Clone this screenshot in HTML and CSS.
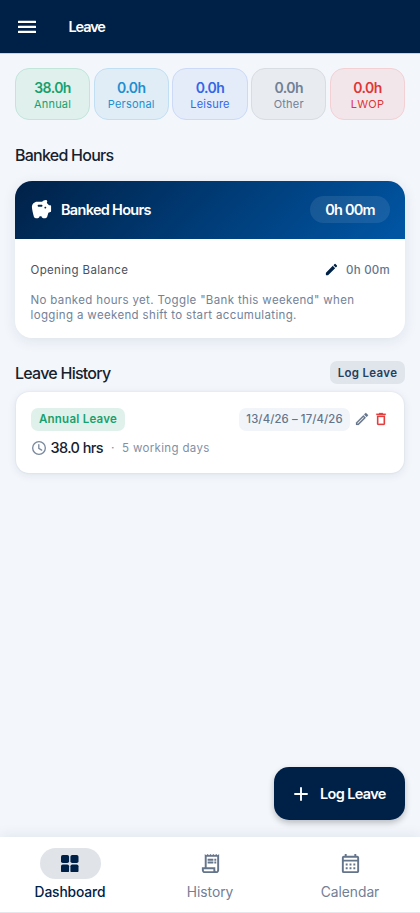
FILE: index.html
```html
<!DOCTYPE html>
<html lang="en">
<head>
<meta charset="utf-8">
<meta name="viewport" content="width=device-width, initial-scale=1">
<title>Leave</title>
<link rel="stylesheet" href="styles.css">
</head>
<body>
<div class="app">
  <header class="topbar">
    <svg class="menu" viewBox="0 0 18 14"><path d="M.5 1.900h17M.5 6.900h17M.5 11.900h17" stroke="#fff" stroke-width="2.200" stroke-linecap="round"/></svg>
    <h1 class="topbar-title">Leave</h1>
  </header>
  <main class="content">
    <section class="chips">
      <div class="chip annual"><b>38.0h</b><span>Annual</span></div>
      <div class="chip personal"><b>0.0h</b><span>Personal</span></div>
      <div class="chip leisure"><b>0.0h</b><span>Leisure</span></div>
      <div class="chip other"><b>0.0h</b><span>Other</span></div>
      <div class="chip lwop"><b>0.0h</b><span>LWOP</span></div>
    </section>
    <h2 class="section-title banked">Banked Hours</h2>
    <section class="bank">
      <div class="bank-head">
        <svg class="pig" viewBox="0 0 24 24"><path fill="#fff" fill-rule="evenodd" d="M19.830 7.500l-2.270-2.270c.070-.420.180-.810.320-1.150.110-.260.150-.560.090-.870C17.840 2.490 17.140 1.990 16.400 2c-1.590.030-3 .810-3.900 2h-5C4.460 4 2 6.460 2 9.500c0 2.250 1.370 7.480 2.080 10.040.240.860 1.030 1.460 1.930 1.460H8c1.100 0 2-.9 2-2h2c0 1.100.9 2 2 2h2.010c.880 0 1.660-.580 1.920-1.430l1.250-4.160 2.140-.720c.410-.140.680-.520.680-.950V8.500c0-.550-.450-1-1-1h-1.170zM12 9H9c-.550 0-1-.450-1-1s.450-1 1-1h3c.550 0 1 .450 1 1s-.450 1-1 1zm4 2c-.550 0-1-.450-1-1s.450-1 1-1 1 .450 1 1-.450 1-1 1z"/></svg>
        <h3 class="bank-title">Banked Hours</h3>
        <span class="bank-total">0h 00m</span>
      </div>
      <div class="bank-body">
        <div class="balance">
          <span class="balance-label">Opening Balance</span>
          <svg class="edit" viewBox="0 0 24 24"><path fill="#002147" d="M3 17.460v3.040c0 .280.220.5.5.5h3.040c.130 0 .260-.050.350-.150L17.810 9.940l-3.750-3.750L3.150 17.100c-.1.1-.150.220-.150.360zM20.710 7.040a1 1 0 0 0 0-1.410l-2.340-2.340a1 1 0 0 0-1.410 0l-1.830 1.830 3.750 3.750 1.830-1.830z"/></svg>
          <span class="balance-value">0h 00m</span>
        </div>
        <p class="bank-note">No banked hours yet. Toggle "Bank this weekend" when<br>logging a weekend shift to start accumulating.</p>
      </div>
    </section>
    <div class="history-head">
      <h2 class="section-title">Leave History</h2>
      <button class="log-small">Log Leave</button>
    </div>
    <article class="entry">
      <div class="entry-top">
        <span class="tag">Annual Leave</span>
        <span class="dates">13/4/26 – 17/4/26</span>
        <svg class="entry-edit" viewBox="0 0 24 24"><path fill="#64748b" stroke="#64748b" stroke-width=".3" d="M3 17.460v3.040c0 .280.220.5.5.5h3.040c.130 0 .260-.050.350-.150L17.810 9.940l-3.750-3.750L3.150 17.100c-.1.1-.150.220-.150.360zM5.920 19H5v-.920l9.060-9.060.920.920L5.920 19zM20.710 5.630l-2.340-2.340a1 1 0 0 0-1.410 0l-1.830 1.830 3.750 3.750 1.830-1.830a1 1 0 0 0 0-1.410z"/></svg>
        <svg class="entry-delete" viewBox="0 0 24 24"><path fill="#e53e3e" stroke="#e53e3e" stroke-width=".4" d="M6 19c0 1.100.9 2 2 2h8c1.100 0 2-.9 2-2V7H6v12zM8 9h8v10H8V9zm7.500-5l-1-1h-5l-1 1H5v2h14V4h-3.500z"/></svg>
      </div>
      <div class="entry-info">
        <svg class="clock" viewBox="0 0 24 24"><path d="M12 2.500a9.500 9.500 0 1 0 0 19 9.500 9.500 0 0 0 0-19zM11.700 7v5.500l4.300 2.600" fill="none" stroke="#7a889d" stroke-width="2" stroke-linecap="round"/></svg>
        <b class="hours">38.0 hrs</b><span class="dot">·</span><span class="days">5 working days</span>
      </div>
    </article>
  </main>
  <button class="fab">
    <svg viewBox="0 0 14 14"><path d="M7 .3v13.400M.3 7h13.400" stroke="#fff" stroke-width="1.900"/></svg>
    <span>Log Leave</span>
  </button>
  <nav class="nav">
    <a class="nav-item active">
      <span class="nav-icon"><svg class="grid-icon" viewBox="0 0 18 18" fill="#002147"><rect width="8.300" height="8.300" rx="1.800"/><rect x="9.700" width="8.300" height="8.300" rx="1.800"/><rect y="9.700" width="8.300" height="8.300" rx="1.800"/><rect x="9.700" y="9.700" width="8.300" height="8.300" rx="1.800"/></svg></span>
      <span class="nav-label">Dashboard</span>
    </a>
    <a class="nav-item">
      <span class="nav-icon"><svg viewBox="0 0 24 24" fill="#64748b"><path d="M19.500 3.500L18 2l-1.500 1.500L15 2l-1.500 1.500L12 2l-1.500 1.500L9 2 7.500 3.500 6 2v14H3v3c0 1.660 1.340 3 3 3h12c1.660 0 3-1.340 3-3V2l-1.500 1.500zM15 20H6c-.550 0-1-.450-1-1v-1h10v2zm4-1c0 .550-.450 1-1 1s-1-.450-1-1v-3H8V5h11v14z"/><path d="M9 7h6v2H9zM16 7h2v2h-2zM9 10h6v2H9zM16 10h2v2h-2z"/></svg></span>
      <span class="nav-label">History</span>
    </a>
    <a class="nav-item">
      <span class="nav-icon"><svg viewBox="0 0 24 24" fill="#64748b"><path d="M19 4h-1V2h-2v2H8V2H6v2H5c-1.110 0-1.990.9-1.990 2L3 20a2 2 0 0 0 2 2h14c1.100 0 2-.9 2-2V6c0-1.100-.9-2-2-2zm0 16H5V10h14v10zm0-12H5V6h14v2zM9 14H7v-2h2v2zm4 0h-2v-2h2v2zm4 0h-2v-2h2v2zm-8 4H7v-2h2v2zm4 0h-2v-2h2v2zm4 0h-2v-2h2v2z"/></svg></span>
      <span class="nav-label">Calendar</span>
    </a>
  </nav>
</div>
</body>
</html>
```
FILE: styles.css
```css
* { box-sizing: border-box; margin: 0; padding: 0; }
body { font-family: Inter, "Liberation Sans", sans-serif; background: #f3f7fc; color: #17212e; white-space: nowrap; }
svg { display: block; flex: none; }
button { border: 0; font: inherit; }
.app { height: 913px; display: flex; flex-direction: column; position: relative; overflow: hidden; }
.topbar { height: 53px; background: #002147; display: flex; align-items: center; padding: 0 18px; gap: 32.500px; flex: none; box-shadow: 0 0 1px #002147; }
.menu { width: 18px; height: 14px; }
.topbar-title { color: #fff; font-size: 14.500px; font-weight: 600; letter-spacing: -1.100px; line-height: 20px; padding-top: 1px; }
.content { flex: 1; padding: 15px 15px 0; }
.chips { display: grid; grid-template-columns: repeat(5, 1fr); gap: 3.700px; }
.chip { height: 52px; border: 1px solid; border-radius: 14px; display: flex; flex-direction: column; align-items: center; padding-top: 9px; }
.chip b { font-size: 14px; line-height: 19px; font-weight: 600; letter-spacing: -0.600px; }
.chip span { font-size: 11px; line-height: 14px; letter-spacing: 0.200px; }
.annual { color: #18a06c; background: #e0f0ed; border-color: #c2e5da; }
.personal { color: #1e8fd0; background: #e0edf7; border-color: #c1dff2; }
.leisure { color: #3366e8; background: #e4ebf9; border-color: #ccdaf8; }
.other { color: #718096; background: #e8ebef; border-color: #d8dde3; }
.lwop { color: #df3638; background: #f3e6ea; border-color: #f2d0d4; }
.section-title { font-size: 16px; line-height: 22px; font-weight: 500; letter-spacing: -0.750px; }
.banked { margin-top: 24px; }
.bank { margin-top: 15px; height: 157px; border-radius: 17px; background: #fff; overflow: hidden; box-shadow: 0 3px 14px rgba(0,33,71,.09); }
.bank-head { height: 57.500px; background: linear-gradient(135deg, #002147, #0056a5); display: flex; align-items: center; padding: 0 15px; color: #fff; }
.pig { width: 23px; height: 23px; }
.bank-title { font-size: 14.500px; line-height: 20px; font-weight: 600; letter-spacing: -0.700px; margin: 1px 0 0 8px; flex: 1; }
.bank-total { width: 80px; height: 27px; border-radius: 14px; background: rgba(255,255,255,.09); font-size: 14.500px; line-height: 28px; font-weight: 600; letter-spacing: -0.800px; text-align: center; }
.bank-body { padding: 21px 15px 0 15.500px; }
.balance { display: flex; align-items: center; height: 20px; color: #4a5260; font-size: 11.500px; }
.balance-label { flex: 1; letter-spacing: 0.350px; }
.edit { width: 15px; height: 15px; margin-right: 7.500px; }
.balance-value { color: #64748b; font-weight: 500; letter-spacing: 0.250px; }
.bank-note { margin-top: 13.500px; font-size: 11.500px; line-height: 15px; letter-spacing: 0.350px; color: #748298; }
.history-head { display: flex; align-items: center; justify-content: space-between; margin-top: 23px; height: 23px; }
.log-small { width: 75px; height: 23px; border-radius: 7px; background: #e0e5ec; color: #24405f; font-size: 11.500px; line-height: 22px; font-weight: 600; letter-spacing: 0.320px; }
.entry { margin: 8px 1px 0; height: 81px; border-radius: 13px; background: #fff; padding: 15.500px 15px 0; box-shadow: 0 2px 10px rgba(0,33,71,.09), 0 0 2px rgba(0,33,71,.1); }
.entry-top { display: flex; align-items: center; height: 23px; }
.tag { width: 94px; height: 23px; border-radius: 7px; background: #e0f1eb; color: #18a06c; font-size: 11.500px; line-height: 23px; font-weight: 600; letter-spacing: 0.250px; text-align: center; }
.dates { width: 111px; height: 23px; margin-left: auto; border-radius: 7px; background: #f1f5fa; color: #64748b; font-size: 11.300px; line-height: 23px; font-weight: 500; letter-spacing: 0.120px; text-align: center; }
.entry-edit { width: 16px; height: 16px; margin-left: 4px; }
.entry-delete { width: 16px; height: 16px; margin: 0 0 0 3px; }
.entry-info { display: flex; align-items: center; height: 22px; margin-top: 6px; }
.clock { width: 16px; height: 16px; }
.hours { font-size: 14.500px; font-weight: 500; letter-spacing: -0.600px; margin-left: 3.500px; }
.dot { font-size: 12px; color: #8290a4; margin-left: 8px; }
.days { font-size: 11.500px; letter-spacing: 0.350px; color: #8290a4; margin-left: 7.500px; }
.fab { position: absolute; right: 15px; bottom: 93px; width: 131px; height: 53px; border-radius: 15px; background: #002147; color: #fff; display: flex; align-items: center; padding-left: 20px; gap: 12px; font-size: 14.500px; font-weight: 600; letter-spacing: -0.650px; box-shadow: 0 3px 6px rgba(0,0,0,.24); }
.fab svg { width: 14px; height: 14px; }
.nav { height: 76px; flex: none; background: #fff; display: grid; grid-template-columns: repeat(3, 1fr); border-bottom: 1px solid #e4e6e9; box-shadow: 0 -2px 12px rgba(0,33,71,.08); }
.nav-item { display: flex; flex-direction: column; align-items: center; padding-top: 11px; color: #718096; }
.nav-icon { width: 61px; height: 31px; border-radius: 16px; display: flex; align-items: center; justify-content: center; }
.nav-icon svg { width: 23px; height: 23px; }
.nav-icon .grid-icon { width: 17.500px; height: 17.500px; }
.nav-label { font-size: 13.800px; line-height: 18px; margin-top: 4px; letter-spacing: -0.020px; }
.active { color: #002147; }
.active .nav-icon { background: #e0e4e9; }
.active .nav-label { font-weight: 500; letter-spacing: -0.120px; }
```
